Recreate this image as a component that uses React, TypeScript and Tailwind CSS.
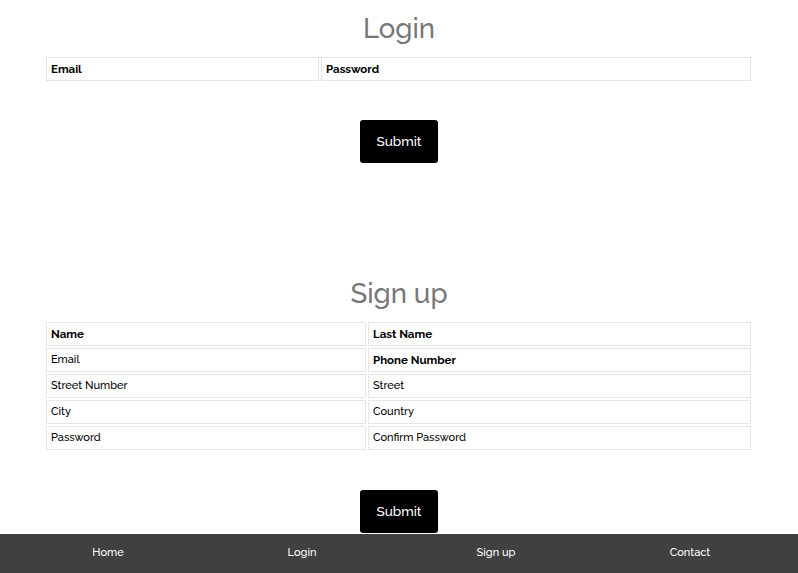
const font = { fontFamily: "Raleway, Lato, 'Open Sans', sans-serif" };

const Cell = ({ children, bold, w }: { children: string; bold?: boolean; w?: string }) => {
  const Tag = bold ? "th" : "td";
  return (
    <Tag
      className={`${w ?? ""} border border-[#e6e6e6] px-[4px] py-[3px] text-left leading-[16px] text-black ${
        bold ? "text-[11.5px] font-bold" : "text-[11px] font-medium"
      }`}
    >
      {children}
    </Tag>
  );
};

const SubmitButton = () => (
  <div className="flex justify-center">
    <button className="h-[43px] w-[78px] rounded-[3px] bg-black text-[13.5px] font-medium text-white">Submit</button>
  </div>
);

export default function App() {
  return (
    <div className="min-h-screen bg-white pb-[60px]" style={font}>
      <section>
        <h1 className="pt-[11px] text-center text-[27.5px] font-medium leading-[35px] text-[#777777]">Login</h1>
        <table className="ml-[44px] mt-[9px] w-[709px] border-separate border-spacing-[2px]">
          <tbody>
            <tr>
              <Cell bold w="w-[273px]">Email</Cell>
              <Cell bold>Password</Cell>
            </tr>
          </tbody>
        </table>
        <div className="mt-[37px]">
          <SubmitButton />
        </div>
      </section>

      <section className="mt-[113px]">
        <h1 className="text-center text-[27.5px] font-medium leading-[35px] text-[#777777]">Sign up</h1>
        <table className="ml-[44px] mt-[9px] w-[709px] border-separate border-spacing-[2px]">
          <tbody>
            <tr>
              <Cell bold w="w-[320px]">Name</Cell>
              <Cell bold>Last Name</Cell>
            </tr>
            <tr>
              <Cell>Email</Cell>
              <Cell bold>Phone Number</Cell>
            </tr>
            <tr>
              <Cell>Street Number</Cell>
              <Cell>Street</Cell>
            </tr>
            <tr>
              <Cell>City</Cell>
              <Cell>Country</Cell>
            </tr>
            <tr>
              <Cell>Password</Cell>
              <Cell>Confirm Password</Cell>
            </tr>
          </tbody>
        </table>
        <div className="mt-[38px]">
          <SubmitButton />
        </div>
      </section>

      <footer className="fixed bottom-0 left-0 right-0 grid h-[39px] grid-cols-4 items-center bg-[#404040] px-[11px] text-center text-[11px] font-medium text-white">
        <span>Home</span>
        <span>Login</span>
        <span>Sign up</span>
        <span>Contact</span>
      </footer>
    </div>
  );
}
